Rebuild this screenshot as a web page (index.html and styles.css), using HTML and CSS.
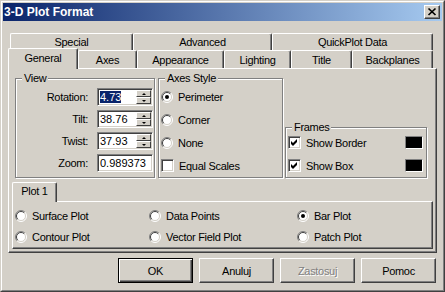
FILE: index.html
```html
<!DOCTYPE html>
<html lang="pl">
<head>
    <meta charset="UTF-8">
    <title>3-D Plot Format</title>
    <link rel="stylesheet" href="styles.css">
</head>
<body>
<div class="window">
    <div class="frame">
        <div class="titlebar">
            <span class="caption">3-D Plot Format</span>
            <span class="close">
                <svg width="14" height="12" viewBox="1 1 14 12"><path d="M4.5 3.5l7 6.5M11.5 3.5l-7 6.5" stroke="#000" stroke-width="1.7" fill="none"/></svg>
            </span>
        </div>

        <div class="client">
            <div class="tabs">
                <div class="tabrow back">
                    <div class="tab t-special">Special</div>
                    <div class="tab t-advanced">Advanced</div>
                    <div class="tab t-quick">QuickPlot Data</div>
                </div>
                <div class="tabrow front">
                    <div class="tab t-general selected">General</div>
                    <div class="tab t-axes">Axes</div>
                    <div class="tab t-appearance">Appearance</div>
                    <div class="tab t-lighting">Lighting</div>
                    <div class="tab t-title">Title</div>
                    <div class="tab t-backplanes">Backplanes</div>
                </div>

                <div class="panel">
                    <div class="groups">
                        <div class="group view">
                            <span class="legend">View</span>
                            <div class="fields">
                                <div class="field">
                                    <span class="name">Rotation:</span>
                                    <span class="edit">
                                        <span class="value"><span class="sel">4.73</span></span>
                                        <span class="spin"><span class="up"></span><span class="down"></span></span>
                                    </span>
                                </div>
                                <div class="field">
                                    <span class="name">Tilt:</span>
                                    <span class="edit">
                                        <span class="value">38.76</span>
                                        <span class="spin"><span class="up"></span><span class="down"></span></span>
                                    </span>
                                </div>
                                <div class="field">
                                    <span class="name">Twist:</span>
                                    <span class="edit">
                                        <span class="value">37.93</span>
                                        <span class="spin"><span class="up"></span><span class="down"></span></span>
                                    </span>
                                </div>
                                <div class="field">
                                    <span class="name">Zoom:</span>
                                    <span class="edit">
                                        <span class="value">0.989373</span>
                                    </span>
                                </div>
                            </div>
                        </div>

                        <div class="group axes">
                            <span class="legend">Axes Style</span>
                            <div class="opts">
                                <div class="opt">
                                    <svg class="radio" viewBox="0 0 12 12"><circle cx="6" cy="6" r="5" fill="#fff"/><path d="M9.9 2.1A5.5 5.5 0 0 0 2.1 9.9" stroke="#808080" fill="none"/><path d="M2.1 9.9A5.5 5.5 0 0 0 9.9 2.1" stroke="#fff" fill="none"/><path d="M9.2 2.8A4.5 4.5 0 0 0 2.8 9.2" stroke="#404040" fill="none"/><path d="M2.8 9.2A4.5 4.5 0 0 0 9.2 2.8" stroke="#d4d0c8" fill="none"/><circle cx="6" cy="6" r="2" fill="#000"/></svg>
                                    <span>Perimeter</span>
                                </div>
                                <div class="opt">
                                    <svg class="radio" viewBox="0 0 12 12"><circle cx="6" cy="6" r="5" fill="#fff"/><path d="M9.9 2.1A5.5 5.5 0 0 0 2.1 9.9" stroke="#808080" fill="none"/><path d="M2.1 9.9A5.5 5.5 0 0 0 9.9 2.1" stroke="#fff" fill="none"/><path d="M9.2 2.8A4.5 4.5 0 0 0 2.8 9.2" stroke="#404040" fill="none"/><path d="M2.8 9.2A4.5 4.5 0 0 0 9.2 2.8" stroke="#d4d0c8" fill="none"/></svg>
                                    <span>Corner</span>
                                </div>
                                <div class="opt">
                                    <svg class="radio" viewBox="0 0 12 12"><circle cx="6" cy="6" r="5" fill="#fff"/><path d="M9.9 2.1A5.5 5.5 0 0 0 2.1 9.9" stroke="#808080" fill="none"/><path d="M2.1 9.9A5.5 5.5 0 0 0 9.9 2.1" stroke="#fff" fill="none"/><path d="M9.2 2.8A4.5 4.5 0 0 0 2.8 9.2" stroke="#404040" fill="none"/><path d="M2.8 9.2A4.5 4.5 0 0 0 9.2 2.8" stroke="#d4d0c8" fill="none"/></svg>
                                    <span>None</span>
                                </div>
                                <div class="opt">
                                    <span class="check"></span>
                                    <span>Equal Scales</span>
                                </div>
                            </div>
                        </div>

                        <div class="group frames">
                            <span class="legend">Frames</span>
                            <div class="opts">
                                <div class="opt">
                                    <span class="check"><svg width="11" height="11" viewBox="0 0 11 11"><path d="M2 4l2 2 4-4v3l-4 4-2-2z" fill="#000"/></svg></span>
                                    <span>Show Border</span>
                                    <span class="swatch"></span>
                                </div>
                                <div class="opt">
                                    <span class="check"><svg width="11" height="11" viewBox="0 0 11 11"><path d="M2 4l2 2 4-4v3l-4 4-2-2z" fill="#000"/></svg></span>
                                    <span>Show Box</span>
                                    <span class="swatch"></span>
                                </div>
                            </div>
                        </div>
                    </div>

                    <div class="subtabs">
                        <div class="subrow">
                            <div class="tab subtab">Plot 1</div>
                        </div>
                        <div class="subpanel">
                            <div class="opt">
                                <svg class="radio" viewBox="0 0 12 12"><circle cx="6" cy="6" r="5" fill="#fff"/><path d="M9.9 2.1A5.5 5.5 0 0 0 2.1 9.9" stroke="#808080" fill="none"/><path d="M2.1 9.9A5.5 5.5 0 0 0 9.9 2.1" stroke="#fff" fill="none"/><path d="M9.2 2.8A4.5 4.5 0 0 0 2.8 9.2" stroke="#404040" fill="none"/><path d="M2.8 9.2A4.5 4.5 0 0 0 9.2 2.8" stroke="#d4d0c8" fill="none"/></svg>
                                <span>Surface Plot</span>
                            </div>
                            <div class="opt">
                                <svg class="radio" viewBox="0 0 12 12"><circle cx="6" cy="6" r="5" fill="#fff"/><path d="M9.9 2.1A5.5 5.5 0 0 0 2.1 9.9" stroke="#808080" fill="none"/><path d="M2.1 9.9A5.5 5.5 0 0 0 9.9 2.1" stroke="#fff" fill="none"/><path d="M9.2 2.8A4.5 4.5 0 0 0 2.8 9.2" stroke="#404040" fill="none"/><path d="M2.8 9.2A4.5 4.5 0 0 0 9.2 2.8" stroke="#d4d0c8" fill="none"/></svg>
                                <span>Data Points</span>
                            </div>
                            <div class="opt">
                                <svg class="radio" viewBox="0 0 12 12"><circle cx="6" cy="6" r="5" fill="#fff"/><path d="M9.9 2.1A5.5 5.5 0 0 0 2.1 9.9" stroke="#808080" fill="none"/><path d="M2.1 9.9A5.5 5.5 0 0 0 9.9 2.1" stroke="#fff" fill="none"/><path d="M9.2 2.8A4.5 4.5 0 0 0 2.8 9.2" stroke="#404040" fill="none"/><path d="M2.8 9.2A4.5 4.5 0 0 0 9.2 2.8" stroke="#d4d0c8" fill="none"/><circle cx="6" cy="6" r="2" fill="#000"/></svg>
                                <span>Bar Plot</span>
                            </div>
                            <div class="opt">
                                <svg class="radio" viewBox="0 0 12 12"><circle cx="6" cy="6" r="5" fill="#fff"/><path d="M9.9 2.1A5.5 5.5 0 0 0 2.1 9.9" stroke="#808080" fill="none"/><path d="M2.1 9.9A5.5 5.5 0 0 0 9.9 2.1" stroke="#fff" fill="none"/><path d="M9.2 2.8A4.5 4.5 0 0 0 2.8 9.2" stroke="#404040" fill="none"/><path d="M2.8 9.2A4.5 4.5 0 0 0 9.2 2.8" stroke="#d4d0c8" fill="none"/></svg>
                                <span>Contour Plot</span>
                            </div>
                            <div class="opt">
                                <svg class="radio" viewBox="0 0 12 12"><circle cx="6" cy="6" r="5" fill="#fff"/><path d="M9.9 2.1A5.5 5.5 0 0 0 2.1 9.9" stroke="#808080" fill="none"/><path d="M2.1 9.9A5.5 5.5 0 0 0 9.9 2.1" stroke="#fff" fill="none"/><path d="M9.2 2.8A4.5 4.5 0 0 0 2.8 9.2" stroke="#404040" fill="none"/><path d="M2.8 9.2A4.5 4.5 0 0 0 9.2 2.8" stroke="#d4d0c8" fill="none"/></svg>
                                <span>Vector Field Plot</span>
                            </div>
                            <div class="opt">
                                <svg class="radio" viewBox="0 0 12 12"><circle cx="6" cy="6" r="5" fill="#fff"/><path d="M9.9 2.1A5.5 5.5 0 0 0 2.1 9.9" stroke="#808080" fill="none"/><path d="M2.1 9.9A5.5 5.5 0 0 0 9.9 2.1" stroke="#fff" fill="none"/><path d="M9.2 2.8A4.5 4.5 0 0 0 2.8 9.2" stroke="#404040" fill="none"/><path d="M2.8 9.2A4.5 4.5 0 0 0 9.2 2.8" stroke="#d4d0c8" fill="none"/></svg>
                                <span>Patch Plot</span>
                            </div>
                        </div>
                    </div>
                </div>
            </div>

            <div class="buttons">
                <button class="btn default">OK</button>
                <button class="btn">Anuluj</button>
                <button class="btn disabled">Zastosuj</button>
                <button class="btn">Pomoc</button>
            </div>
        </div>
    </div>
</div>
</body>
</html>
```

FILE: styles.css
```css
body {
    margin: 0;
    font-family: "Liberation Sans", Arial, sans-serif;
    font-size: 11px;
    letter-spacing: -0.3px;
    color: #000;
    background-color: #d4d0c8;
}
.window {
    width: 445px;
    height: 292px;
    box-sizing: border-box;
    border: 1px solid;
    border-color: #d4d0c8 #404040 #404040 #d4d0c8;
    background-color: #d4d0c8;
}
.frame {
    height: 100%;
    box-sizing: border-box;
    border: 1px solid;
    border-color: #fff #808080 #808080 #fff;
    padding: 1px;
    display: flex;
    flex-direction: column;
}
.titlebar {
    height: 18px;
    flex-shrink: 0;
    display: flex;
    align-items: center;
    justify-content: space-between;
    padding-left: 1px;
    background: linear-gradient(to right, #0a246a, #a6caf0);
}
.caption {
    color: #fff;
    font-weight: bold;
    font-size: 12px;
    letter-spacing: 0;
}
.close {
    width: 16px;
    height: 14px;
    box-sizing: border-box;
    margin-right: 2px;
    display: flex;
    background-color: #d4d0c8;
    border: 1px solid;
    border-color: #fff #404040 #404040 #fff;
    box-shadow: inset -1px -1px #808080;
}
.client {
    flex: 1;
    display: flex;
    flex-direction: column;
    padding: 12px 6px 0 5px;
}

/* tab strip */
.tabrow {
    display: flex;
}
.tabrow.back {
    height: 17px;
    margin-left: 2px;
}
.tabrow.front {
    height: 18px;
    align-items: flex-end;
}
.tab {
    box-sizing: border-box;
    height: 100%;
    border: 1px solid;
    border-bottom: 0;
    border-color: #fff #404040 #fff #fff;
    border-radius: 2px 2px 0 0;
    box-shadow: inset -1px 0 #808080;
    background-color: #d4d0c8;
    text-align: center;
    line-height: 16px;
    white-space: nowrap;
}
.tabrow.front .tab {
    padding-top: 1px;
}
.tab.selected {
    height: 21px;
    margin-bottom: -1px;
    position: relative;
    z-index: 1;
}
.t-special { width: 123px; }
.t-advanced { width: 139px; }
.t-quick { width: 161px; }
.t-general { width: 70px; }
.t-axes { width: 59px; }
.t-appearance { width: 87px; }
.t-lighting { width: 67px; }
.t-title { width: 61px; }
.t-backplanes { width: 81px; }

.panel {
    box-sizing: border-box;
    width: 429px;
    height: 185px;
    border: 1px solid;
    border-color: #fff #404040 #404040 #fff;
    box-shadow: inset -1px -1px #808080;
    padding-top: 9px;
}

/* group boxes */
.groups {
    display: flex;
    align-items: flex-end;
    height: 100px;
    margin-left: 6px;
}
.group {
    box-sizing: border-box;
    border: 1px solid #808080;
    box-shadow: inset 1px 1px #fff, 1px 1px #fff;
    display: flex;
    flex-direction: column;
}
.view {
    width: 140px;
    height: 100px;
    margin-right: 3px;
}
.axes {
    width: 125px;
    height: 100px;
    margin-right: 2px;
}
.frames {
    width: 142px;
    height: 51px;
}
.legend {
    align-self: flex-start;
    margin: -7px 0 0 6px;
    padding: 0 2px;
    line-height: 13px;
    background-color: #d4d0c8;
}
.frames .legend {
    margin-bottom: -3px;
}

.fields {
    display: flex;
    flex-direction: column;
    gap: 4px;
    margin-top: 3px;
}
.field {
    display: flex;
    align-items: center;
    height: 18px;
}
.name {
    width: 72px;
    margin-right: 9px;
    text-align: right;
}
.edit {
    width: 56px;
    height: 18px;
    box-sizing: border-box;
    display: flex;
    padding: 1px;
    background-color: #fff;
    border: 1px solid;
    border-color: #808080 #fff #fff #808080;
    box-shadow: inset 1px 1px #404040, inset -1px -1px #d4d0c8;
    letter-spacing: 0;
}
.value {
    flex: 1;
    padding-left: 1px;
    line-height: 14px;
}
.sel {
    background-color: #0a246a;
    color: #fff;
}
.spin {
    width: 15px;
    display: flex;
    flex-direction: column;
}
.spin span {
    flex: 1;
    box-sizing: border-box;
    display: flex;
    align-items: center;
    justify-content: center;
    background-color: #d4d0c8;
    border: 1px solid;
    border-color: #fff #404040 #404040 #fff;
}
.spin .up::after,
.spin .down::after {
    content: "";
    border-left: 2px solid transparent;
    border-right: 2px solid transparent;
}
.spin .up::after {
    border-bottom: 2px solid #000;
}
.spin .down::after {
    border-top: 2px solid #000;
}

/* radios and checks */
.opts {
    display: flex;
    flex-direction: column;
    padding-left: 2px;
}
.opt {
    display: flex;
    align-items: center;
    gap: 5px;
    height: 23px;
    white-space: nowrap;
}
.radio {
    width: 12px;
    height: 12px;
    flex-shrink: 0;
}
.check {
    width: 13px;
    height: 13px;
    box-sizing: border-box;
    flex-shrink: 0;
    display: flex;
    background-color: #fff;
    border: 1px solid;
    border-color: #808080 #fff #fff #808080;
    box-shadow: inset 1px 1px #404040, inset -1px -1px #d4d0c8;
}
.swatch {
    width: 18px;
    height: 13px;
    box-sizing: border-box;
    margin-left: auto;
    margin-right: 3px;
    background-color: #000;
    border: 1px solid;
    border-color: #808080 #fff #fff #808080;
}

/* plot sub tabs */
.subtabs {
    margin: 5px 0 0 3px;
}
.subrow {
    display: flex;
    align-items: flex-end;
    height: 18px;
}
.subtab {
    width: 45px;
    height: 20px;
    margin-bottom: -1px;
    position: relative;
    z-index: 1;
}
.subpanel {
    box-sizing: border-box;
    width: 421px;
    height: 48px;
    padding: 3px 0 0 2px;
    display: grid;
    grid-template-columns: 134px 148px 1fr;
    grid-auto-rows: 21px;
    border: 1px solid;
    border-color: #fff #404040 #404040 #fff;
    box-shadow: inset -1px -1px #808080;
}
.subpanel .opt {
    height: 21px;
}

/* dialog buttons */
.buttons {
    display: flex;
    justify-content: flex-end;
    gap: 6px;
    margin-top: 5px;
}
.btn {
    width: 75px;
    height: 25px;
    box-sizing: border-box;
    padding: 0;
    font: inherit;
    letter-spacing: inherit;
    color: #000;
    background-color: #d4d0c8;
    border: 1px solid;
    border-color: #fff #404040 #404040 #fff;
    box-shadow: inset -1px -1px #808080;
}
.btn.default {
    border-color: #000;
    box-shadow: inset 1px 1px #fff, inset -1px -1px #404040, inset -2px -2px #808080;
}
.btn.disabled {
    color: #808080;
    text-shadow: 1px 1px #fff;
}
```
